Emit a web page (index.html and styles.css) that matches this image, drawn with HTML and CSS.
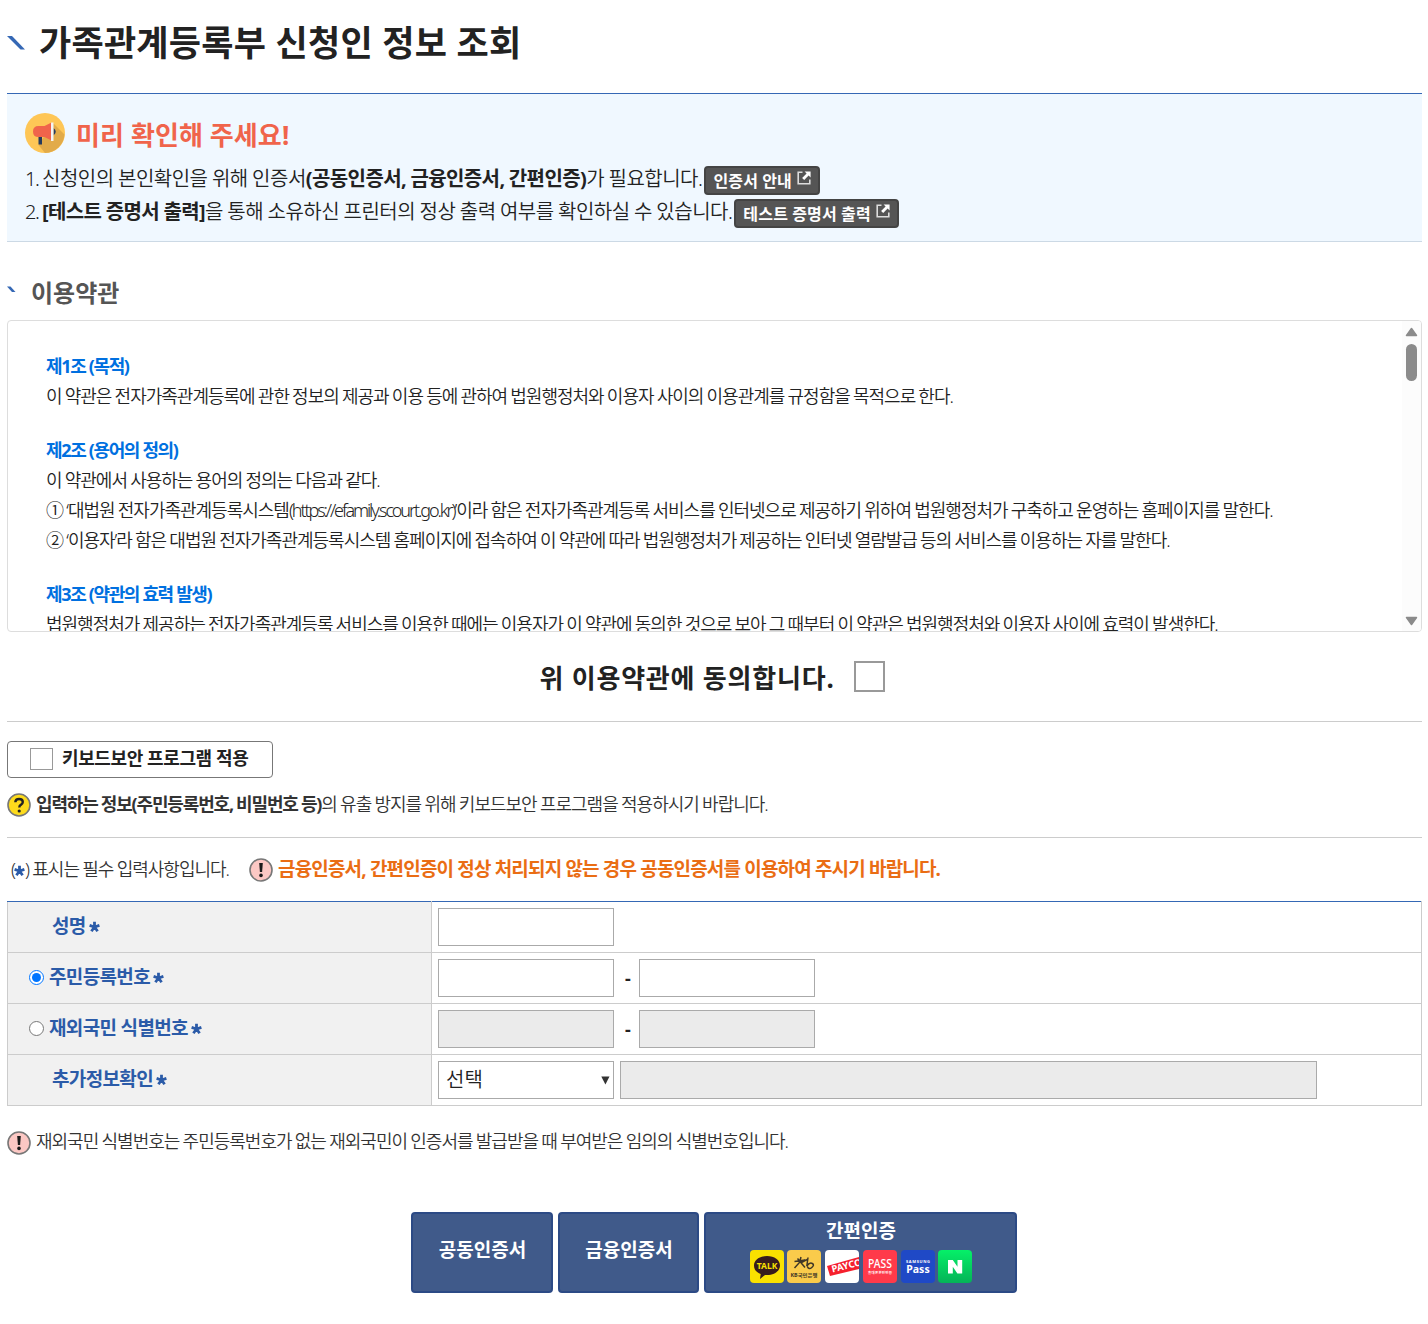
FILE: index.html
```html
<!DOCTYPE html>
<html lang="ko">
<head>
    <meta charset="UTF-8">
    <meta name="viewport" content="width=device-width, initial-scale=1.0">
    <title>가족관계등록부 신청인 정보 조회</title>
    <link rel="stylesheet" href="styles.css">
</head>
<body>
    <!-- 공통 아이콘 -->
    <svg class="defs" width="0" height="0">
        <symbol id="star" viewBox="0 0 11 12">
            <path d="M5.5 6V.8M5.5 6L.6 4.4M5.5 6l4.900-1.600M5.500 6L2.400 10.300M5.500 6l3.100 4.300" stroke="#2b5ba8" stroke-width="2.800" fill="none"/>
        </symbol>
        <symbol id="warn" viewBox="0 0 24 24">
            <circle cx="12" cy="12" r="11" fill="#fcc8c4" stroke="#777" stroke-width="1.600"/>
            <path d="M10.200 5h3.600l-.7 9h-2.200z" fill="#1a1a1a"/>
            <circle cx="12" cy="17.400" r="1.800" fill="#1a1a1a"/>
        </symbol>
        <symbol id="link" viewBox="0 0 14 14">
            <path d="M5.500 1.300H1.200v11.500h11.600V8.600" fill="none" stroke="#ddd" stroke-width="1.600"/>
            <path d="M7.600.5H13.600V6.500L11.600 4.500 7.200 9 5.100 6.900 9.600 2.500z" fill="#fff"/>
        </symbol>
    </svg>

    <h1 class="page-title">
        <svg width="19" height="16" viewBox="0 0 19 16"><path d="M0 1h5l13 13.500h-4.500z" fill="#3568b5"/></svg>
        <span>가족관계등록부 신청인 정보 조회</span>
    </h1>

    <div class="notice">
        <div class="notice-title">
            <svg width="40" height="40" viewBox="0 0 40 40">
                <circle cx="20" cy="20" r="20" fill="#fec656"/>
                <path d="M28 10L39.500 21.500A20 20 0 0 1 20 40L13.500 32z" fill="#e2ab49"/>
                <path d="M13.500 23h3.500v8.500h-3.500z" fill="#253a5e"/>
                <path d="M28.500 15q4.500 3.500 0 7.500z" fill="#253a5e"/>
                <path d="M8 18.500q0-5.500 5.500-5.500h6l7-3.500v18l-7-3.500h-6q-5.500 0-5.500-5.500z" fill="#f0644b"/>
                <path d="M26 9.500h2.500v18.500H26z" fill="#f4f4f4"/>
            </svg>
            <strong>미리 확인해 주세요!</strong>
        </div>
        <p class="notice-line"><span><i>1. </i>신청인의 본인확인을 위해 인증서<b>(공동인증서, 금융인증서, 간편인증)</b>가 필요합니다.</span><a class="link-btn">인증서 안내<svg width="14" height="14"><use href="#link"/></svg></a></p>
        <p class="notice-line"><span><i>2. </i><b>[테스트 증명서 출력]</b>을 통해 소유하신 프린터의 정상 출력 여부를 확인하실 수 있습니다.</span><a class="link-btn">테스트 증명서 출력<svg width="14" height="14"><use href="#link"/></svg></a></p>
    </div>

    <h2 class="sub-title">
        <svg width="9" height="7" viewBox="0 0 9 7"><path d="M0 .5h3.500L8.500 6H5z" fill="#3568b5"/></svg>
        <span>이용약관</span>
    </h2>

    <div class="terms">
        <div class="terms-text">
            <h3>제1조 (목적)</h3>
            <p>이 약관은 전자가족관계등록에 관한 정보의 제공과 이용 등에 관하여 법원행정처와 이용자 사이의 이용관계를 규정함을 목적으로 한다.</p>
            <h3>제2조 (용어의 정의)</h3>
            <p>이 약관에서 사용하는 용어의 정의는 다음과 같다.</p>
            <p>① ‘대법원 전자가족관계등록시스템<span class="url">(https://efamily.scourt.go.kr)</span>’이라 함은 전자가족관계등록 서비스를 인터넷으로 제공하기 위하여 법원행정처가 구축하고 운영하는 홈페이지를 말한다.</p>
            <p>② ‘이용자’라 함은 대법원 전자가족관계등록시스템 홈페이지에 접속하여 이 약관에 따라 법원행정처가 제공하는 인터넷 열람발급 등의 서비스를 이용하는 자를 말한다.</p>
            <h3>제3조 (약관의 효력 발생)</h3>
            <p>법원행정처가 제공하는 전자가족관계등록 서비스를 이용한 때에는 이용자가 이 약관에 동의한 것으로 보아 그 때부터 이 약관은 법원행정처와 이용자 사이에 효력이 발생한다.</p>
        </div>
        <div class="scroll">
            <svg width="13" height="10" viewBox="0 0 13 10"><path d="M6.500 1.500L11.500 8.500h-10z" fill="#8b8b8b" stroke="#8b8b8b" stroke-width="1.500" stroke-linejoin="round"/></svg>
            <div class="scroll-thumb"></div>
            <svg class="down" width="13" height="10" viewBox="0 0 13 10"><path d="M6.500 8.500L11.500 1.500h-10z" fill="#8b8b8b" stroke="#8b8b8b" stroke-width="1.500" stroke-linejoin="round"/></svg>
        </div>
    </div>

    <label class="agree"><span>위 이용약관에 동의합니다.</span><input type="checkbox"></label>

    <div class="keyboard">
        <label class="key-box"><input type="checkbox"><span>키보드보안 프로그램 적용</span></label>
        <p class="help">
            <svg width="24" height="24" viewBox="0 0 24 24">
                <circle cx="12" cy="12" r="11" fill="#fddb1c" stroke="#777" stroke-width="1.600"/>
                <path d="M8.300 9.300q.2-3.300 3.800-3.300t3.700 3q0 1.700-2 2.900-1.500.8-1.500 2.600" fill="none" stroke="#222" stroke-width="2.400"/>
                <circle cx="12.200" cy="18" r="1.600" fill="#222"/>
            </svg>
            <span><b>입력하는 정보(주민등록번호, 비밀번호 등)</b>의 유출 방지를 위해 키보드보안 프로그램을 적용하시기 바랍니다.</span>
        </p>
    </div>

    <div class="required">
        <span class="req-text">(<svg class="star" width="11" height="12"><use href="#star"/></svg>) 표시는 필수 입력사항입니다.</span>
        <svg width="24" height="24"><use href="#warn"/></svg>
        <strong>금융인증서, 간편인증이 정상 처리되지 않는 경우 공동인증서를 이용하여 주시기 바랍니다.</strong>
    </div>

    <table class="form">
        <tr>
            <th class="indent"><div><span>성명</span><svg class="star" width="11" height="12"><use href="#star"/></svg></div></th>
            <td><div><input type="text"></div></td>
        </tr>
        <tr>
            <th><div><input type="radio" name="idType" checked><span>주민등록번호</span><svg class="star" width="11" height="12"><use href="#star"/></svg></div></th>
            <td><div><input type="text"><span class="dash">-</span><input type="text"></div></td>
        </tr>
        <tr>
            <th><div><input type="radio" name="idType"><span>재외국민 식별번호</span><svg class="star" width="11" height="12"><use href="#star"/></svg></div></th>
            <td><div><input type="text" disabled><span class="dash">-</span><input type="text" disabled></div></td>
        </tr>
        <tr>
            <th class="indent"><div><span>추가정보확인</span><svg class="star" width="11" height="12"><use href="#star"/></svg></div></th>
            <td><div>
                <div class="select"><span>선택</span><svg width="9" height="9" viewBox="0 0 9 9"><path d="M.3.5h8.200L4.400 8.500z" fill="#333"/></svg></div>
                <input class="wide" type="text" disabled>
            </div></td>
        </tr>
    </table>

    <p class="help note">
        <svg width="24" height="24"><use href="#warn"/></svg>
        <span>재외국민 식별번호는 주민등록번호가 없는 재외국민이 인증서를 발급받을 때 부여받은 임의의 식별번호입니다.</span>
    </p>

    <div class="buttons">
        <button class="cert">공동인증서</button>
        <button class="cert second">금융인증서</button>
        <button class="easy">
            <span>간편인증</span>
            <div class="logos">
                <svg width="34" height="33" viewBox="0 0 34 33">
                    <rect width="34" height="33" rx="4" fill="#fae100"/>
                    <path d="M17 6c7.500 0 13 4 13 9.500S24.500 25 17 25l-2-.1L10 29l.7-5C6.500 22.500 4 19.500 4 15.500 4 10 9.500 6 17 6z" fill="#371c1d"/>
                    <text x="17" y="18.800" class="t-talk">TALK</text>
                </svg>
                <svg width="34" height="33" viewBox="0 0 34 33">
                    <rect width="34" height="33" rx="4" fill="#facb4b"/>
                    <path d="M7.500 11.500l10.500-1.500M14 7l-1.500 5.500-5 5.500M10.500 8.500l7.500 9M20 9.500l-6.500 3.500M21 7.500l-1.200 8.500q3-4 5.500-2.500t-.5 4-4.500-1" fill="none" stroke="#403727" stroke-width="1.500"/>
                    <text x="17" y="27" class="t-kb" textLength="27" lengthAdjust="spacingAndGlyphs">KB국민은행</text>
                </svg>
                <svg width="34" height="33" viewBox="0 0 34 33">
                    <rect width="34" height="33" rx="4" fill="#fff"/>
                    <path d="M2 16L34 7v12L5 26z" fill="#f5202d"/>
                    <text x="7.500" y="22.500" class="t-payco" transform="rotate(-14 7.500 22.500)">PAYCO</text>
                </svg>
                <svg width="34" height="33" viewBox="0 0 34 33">
                    <rect width="34" height="33" rx="4" fill="#ff3a4a"/>
                    <text x="17" y="18" class="t-pass" textLength="24" lengthAdjust="spacingAndGlyphs">PASS</text>
                    <text x="17" y="24" class="t-pass2" textLength="24">휴대폰본인인증</text>
                </svg>
                <svg width="34" height="33" viewBox="0 0 34 33">
                    <rect width="34" height="33" rx="4" fill="#1f49c6"/>
                    <text x="17" y="13" class="t-sam" textLength="24">SAMSUNG</text>
                    <text x="17" y="23" class="t-spass">Pass</text>
                </svg>
                <svg width="34" height="33" viewBox="0 0 34 33">
                    <defs><linearGradient id="naver" x2="0" y2="1"><stop stop-color="#05f068"/><stop offset="1" stop-color="#05b357"/></linearGradient></defs>
                    <rect width="34" height="33" rx="4" fill="url(#naver)"/>
                    <path d="M10 10h4.800l4.700 6.700V10h4.700v13.500h-4.800L14.800 16.800v6.700H10z" fill="#fff"/>
                </svg>
            </div>
        </button>
    </div>
</body>
</html>
```
FILE: styles.css
```css
* {
    box-sizing: border-box;
}

body {
    margin: 0;
    padding: 0 6px 0 7px;
    font-family: "Noto Sans", "Noto Sans CJK KR", sans-serif;
    font-weight: 350;
    color: #222;
    background-color: #fff;
}

h1, h2, h3, p {
    margin: 0;
}

b, strong {
    font-weight: 700;
}

span, strong {
    white-space: nowrap;
}

svg {
    flex: none;
    display: block;
}

.defs {
    position: absolute;
}

.page-title {
    display: flex;
    align-items: center;
    height: 93px;
    padding-bottom: 8px;
    gap: 13px;
    font-size: 35px;
    line-height: 50px;
    letter-spacing: 0.25px;
}

/* 안내 박스 */
.notice {
    height: 149px;
    padding: 19px 18px 0;
    background-color: #f0f8ff;
    border-top: 1px solid #3568b5;
    border-bottom: 1px solid #ccd9e5;
}

.notice-title {
    display: flex;
    align-items: center;
    gap: 11px;
    height: 40px;
    margin-bottom: 11px;
    color: #f0644b;
    font-size: 26px;
    letter-spacing: 0.1px;
}

.notice-title strong {
    padding-top: 2px;
}

.notice-line {
    display: flex;
    align-items: center;
    height: 33px;
    font-size: 20px;
    letter-spacing: -0.5px;
    word-spacing: -0.3px;
}

.notice-line span {
    padding-bottom: 6px;
}

.notice-line b {
    letter-spacing: -0.6px;
}

.notice-line i {
    font-style: normal;
    letter-spacing: -1.4px;
}

.link-btn {
    display: flex;
    align-items: center;
    height: 29px;
    margin-left: 2px;
    padding: 0 7px 2px;
    gap: 5px;
    border: 2px solid #444;
    border-radius: 4px;
    background-color: #555;
    color: #fff;
    font-size: 16px;
    font-weight: 700;
    letter-spacing: 0.2px;
    white-space: nowrap;
}

.link-btn svg {
    margin-bottom: 3px;
}

.sub-title {
    display: flex;
    align-items: center;
    gap: 15px;
    height: 78px;
    padding-top: 20px;
    color: #555;
    font-size: 24px;
}

.sub-title svg {
    margin-bottom: 4px;
}

/* 이용약관 */
.terms {
    display: flex;
    height: 312px;
    border: 1px solid #ddd;
    border-radius: 4px;
    overflow: hidden;
}

.terms-text {
    flex: 1;
    padding: 30px 0 0 38px;
    font-size: 18px;
    line-height: 30px;
    letter-spacing: -1px;
    word-spacing: -0.5px;
    white-space: nowrap;
}

.terms-text h3 {
    color: #0070e0;
    font-size: 18px;
    font-weight: 700;
    letter-spacing: -1.35px;
    word-spacing: 0;
}

.terms-text p + h3 {
    margin-top: 24px;
}

.url {
    letter-spacing: -2.1px;
}

.scroll {
    display: flex;
    flex-direction: column;
    align-items: center;
    width: 19px;
    padding: 6px 0 5px;
    background-color: #fcfcfc;
}

.scroll-thumb {
    width: 11px;
    height: 37px;
    margin-top: 7px;
    border-radius: 6px;
    background-color: #8b8b8b;
}

.scroll .down {
    margin-top: auto;
}

input[type="checkbox"] {
    appearance: none;
    flex: none;
    margin: 0;
    background-color: #fff;
    border: 2px solid #999;
}

.agree {
    display: flex;
    align-items: center;
    justify-content: center;
    gap: 19px;
    height: 89px;
    padding-right: 5px;
    font-size: 26px;
    font-weight: 700;
    letter-spacing: 0.8px;
}

.agree input {
    width: 31px;
    height: 31px;
}

/* 키보드보안 */
.keyboard {
    height: 117px;
    padding-top: 19px;
    border-top: 1px solid #ccc;
    border-bottom: 1px solid #ccc;
}

.key-box {
    display: flex;
    align-items: center;
    gap: 9px;
    width: 266px;
    height: 37px;
    padding-left: 22px;
    border: 1px solid #777;
    border-radius: 4px;
    font-size: 18px;
    font-weight: 700;
    letter-spacing: -0.4px;
}

.key-box span {
    padding-bottom: 5px;
}

.key-box input {
    width: 23px;
    height: 22px;
    margin-bottom: 1px;
    border-width: 1px;
}

.help {
    display: flex;
    align-items: center;
    gap: 5px;
    margin-top: 15px;
    height: 24px;
    color: #333;
    font-size: 18px;
    letter-spacing: -1px;
    word-spacing: -0.4px;
}

.help span {
    padding-bottom: 4px;
}

.help b {
    letter-spacing: -1.15px;
}

.required {
    display: flex;
    align-items: center;
    height: 63px;
    padding-left: 4px;
    color: #333;
}

.req-text {
    margin-right: 20px;
    padding-bottom: 3px;
    font-size: 18px;
    letter-spacing: -1px;
    word-spacing: -0.4px;
}

.req-text .star {
    display: inline-block;
    margin-left: -1px;
    vertical-align: -1px;
}

.required strong {
    margin-left: 5px;
    padding-bottom: 3px;
    color: #ea6d14;
    font-size: 19px;
    letter-spacing: -0.83px;
}

/* 입력 표 */
.form {
    width: 1415px;
    table-layout: fixed;
    border-collapse: collapse;
    border: 1px solid #ccc;
    border-top: 1px solid #3568b5;
}

.form th,
.form td {
    height: 51px;
    padding: 0 0 0 6px;
    border: 1px solid #ccc;
}

.form tr:first-child > * {
    border-top: 1px solid #3568b5;
}

.form th {
    width: 424px;
    padding-left: 21px;
    background-color: #f1f1f1;
    color: #2b5ba8;
    font-size: 19px;
    font-weight: 700;
    letter-spacing: -0.65px;
}

.form th.indent {
    padding-left: 44px;
}

.form th div,
.form td > div {
    display: flex;
    align-items: center;
}

.form th span {
    padding-bottom: 4px;
}

.form .star {
    margin: 0 0 1px 3px;
}

.form input[type="radio"] {
    width: 15px;
    height: 15px;
    margin: 0 5px 1px 0;
}

.form input[type="text"],
.select {
    width: 176px;
    height: 38px;
    border: 1px solid #aaa;
    background-color: #fff;
}

.form input[type="text"]:disabled {
    background-color: #ebebeb;
}

.form input.wide {
    width: 697px;
    margin-left: 6px;
}

.dash {
    width: 25px;
    padding-left: 3px;
    font-size: 18px;
    font-weight: 700;
    text-align: center;
}

.select {
    display: flex;
    align-items: center;
    justify-content: space-between;
    padding: 0 3px 0 7px;
    font-size: 20px;
}

.select span {
    padding-bottom: 3px;
}

.note {
    margin-top: 25px;
}

.note span {
    padding-bottom: 6px;
}

.buttons {
    display: flex;
    justify-content: center;
    gap: 5px;
    margin-top: 57px;
    padding-right: 2px;
}

.buttons button {
    height: 81px;
    padding: 0;
    border: 2px solid #2c4a85;
    border-radius: 4px;
    background-color: #405a8a;
    color: #fff;
    font-family: inherit;
    font-size: 19px;
    font-weight: 700;
}

.buttons .cert {
    width: 142px;
    padding: 0 0 8px 2px;
}

.buttons .second {
    width: 141px;
}

.buttons .easy {
    width: 313px;
    padding: 0 0 6px 2px;
}

.easy > span {
    display: block;
    margin-bottom: 5px;
    line-height: 28px;
}

.logos {
    display: flex;
    justify-content: center;
    gap: 3.8px;
}

.logos text {
    fill: #fff;
    font-family: "Noto Sans", "Noto Sans CJK KR", sans-serif;
    font-weight: 700;
    text-anchor: middle;
}

.logos .t-talk { font-size: 8.5px; fill: #fae100; }
.logos .t-kb { font-size: 4.8px; fill: #403727; }
.logos .t-payco { font-size: 9.5px; text-anchor: start; }
.logos .t-pass { font-size: 12px; font-weight: 500; }
.logos .t-pass2 { font-size: 3.5px; }
.logos .t-sam { font-size: 4px; }
.logos .t-spass { font-size: 10.5px; }
```
